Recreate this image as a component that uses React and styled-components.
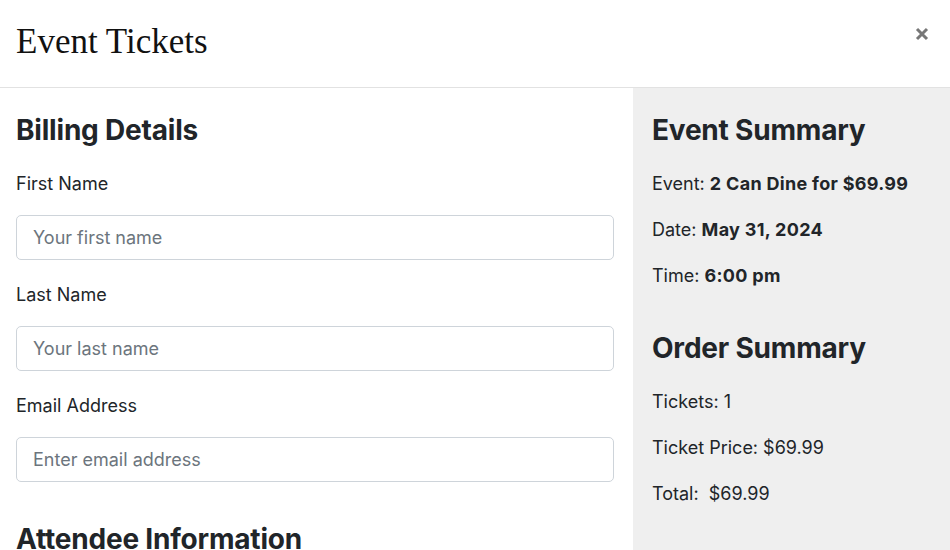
import React from 'react';
import styled, { createGlobalStyle } from 'styled-components';

const GlobalStyle = createGlobalStyle`
    html, body {
        margin: 0;
        padding: 0;
        background: #ffffff;
    }
    body {
        font-family: "Inter", "Liberation Sans", sans-serif;
        color: #212529;
    }
`;

const Modal = styled.div`
    width: 950px;
    height: 550px;
    overflow: hidden;
    display: flex;
    flex-direction: column;
    background: #ffffff;
`;

const ModalHeader = styled.div`
    display: flex;
    justify-content: space-between;
    align-items: center;
    height: 88px;
    padding: 0 20px 4px 16px;
    box-sizing: border-box;
    border-bottom: 1px solid #e2e2e2;
    flex-shrink: 0;
`;

const ModalTitle = styled.h1`
    margin: 0;
    font-family: "Liberation Serif", serif;
    font-weight: 400;
    font-size: 35px;
    color: #111111;
`;

const CloseButton = styled.button`
    border: none;
    background: transparent;
    padding: 0;
    margin-bottom: 16px;
    width: 16px;
    height: 16px;
    display: flex;
    align-items: center;
    justify-content: center;
    cursor: pointer;
`;

const ModalBody = styled.div`
    display: grid;
    grid-template-columns: 633px 1fr;
    flex: 1;
`;

const BillingColumn = styled.div`
    padding: 25px 19px 0 16px;
    display: flex;
    flex-direction: column;
`;

const SummaryColumn = styled.div`
    background: #efefef;
    padding: 25px 19px 0 19px;
    display: flex;
    flex-direction: column;
`;

const SectionTitle = styled.h3`
    margin: ${props => props.$top || 0}px 0 0 0;
    font-size: 28px;
    line-height: 34px;
    font-weight: 700;
    letter-spacing: -0.2px;
    color: #212529;
`;

const Field = styled.div`
    display: flex;
    flex-direction: column;
    margin-top: ${props => props.$first ? 25 : 23}px;
`;

const Label = styled.label`
    font-size: 18px;
    line-height: 24px;
    margin-bottom: 19px;
`;

const Input = styled.input`
    height: 45px;
    box-sizing: border-box;
    border: 1px solid #ced4da;
    border-radius: 5px;
    padding: 0 16px;
    font-family: "Inter", "Liberation Sans", sans-serif;
    font-size: 18px;
    color: #212529;
    &::placeholder {
        color: #6c757d;
    }
`;

const SummaryLine = styled.p`
    margin: ${props => props.$first ? 25 : 22}px 0 0 0;
    font-size: 18px;
    line-height: 24px;
    white-space: pre;
    & > strong {
        font-weight: 700;
        letter-spacing: 0.3px;
    }
`;

const CloseIcon = () => (
    <svg width="14" height="14" viewBox="0 0 14 14">
        <path d="M2 2 L12 12 M12 2 L2 12" stroke="#777777" strokeWidth="3" strokeLinecap="butt" />
    </svg>
);

const App = () => {
    return <Modal>
        <GlobalStyle />
        <ModalHeader>
            <ModalTitle>Event Tickets</ModalTitle>
            <CloseButton aria-label="Close"><CloseIcon /></CloseButton>
        </ModalHeader>
        <ModalBody>
            <BillingColumn>
                <SectionTitle>Billing Details</SectionTitle>
                <Field $first>
                    <Label>First Name</Label>
                    <Input placeholder="Your first name" />
                </Field>
                <Field>
                    <Label>Last Name</Label>
                    <Input placeholder="Your last name" />
                </Field>
                <Field>
                    <Label>Email Address</Label>
                    <Input placeholder="Enter email address" />
                </Field>
                <SectionTitle $top={40}>Attendee Information</SectionTitle>
            </BillingColumn>
            <SummaryColumn>
                <SectionTitle>Event Summary</SectionTitle>
                <SummaryLine $first>Event: <strong>2 Can Dine for $69.99</strong></SummaryLine>
                <SummaryLine>Date: <strong>May 31, 2024</strong></SummaryLine>
                <SummaryLine>Time: <strong>6:00 pm</strong></SummaryLine>
                <SectionTitle $top={43}>Order Summary</SectionTitle>
                <SummaryLine $first>Tickets: 1</SummaryLine>
                <SummaryLine>Ticket Price: $69.99</SummaryLine>
                <SummaryLine>Total:  $69.99</SummaryLine>
            </SummaryColumn>
        </ModalBody>
    </Modal>
}

export default App;
